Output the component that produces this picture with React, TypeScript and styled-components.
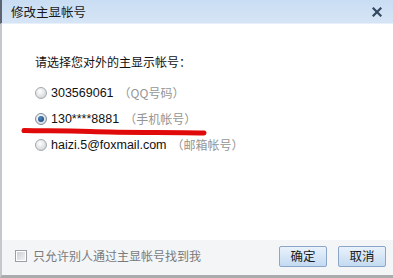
import React from "react";
import styled, { createGlobalStyle } from "styled-components";

const Global = createGlobalStyle`
  html, body { margin: 0; padding: 0; background: #ffffff; }
  body { font-family: "Noto Sans CJK SC", "DejaVu Sans", sans-serif; }
`;

const cjk = `"Noto Sans CJK SC", "Noto Sans", sans-serif`;
const latin = `"Liberation Sans", "Noto Sans CJK SC", sans-serif`;

const Window = styled.div`
  position: relative;
  width: 393px;
  height: 278px;
  display: flex;
  flex-direction: column;
  overflow: hidden;
  background: #ffffff;
`;

const TitleBar = styled.div`
  height: 24px;
  flex: none;
  display: flex;
  align-items: center;
  justify-content: space-between;
  padding: 0 10px 0 11px;
  background: linear-gradient(#c9ddf3, #d6e5f6);
  border-bottom: 1px solid #e8f0fa;
  border-left: 2px solid #5b6470;
  box-sizing: border-box;
`;

const Title = styled.span`
  font-family: ${cjk};
  font-size: 12.5px;
  color: #1a1a1a;
  line-height: 16px;
  margin-left: -2px;
`;

const Close = styled.span`
  display: flex;
  width: 12px;
  height: 12px;
  align-items: center;
  justify-content: center;
`;

const Body = styled.div`
  flex: 1;
  border-left: 2px solid #c4c7cb;
  padding: 30px 0 0 33px;
  box-sizing: border-box;
  display: flex;
  flex-direction: column;
`;

const Prompt = styled.div`
  font-family: ${cjk};
  font-size: 12px;
  line-height: 16px;
  color: #111;
`;

const OptionList = styled.div`
  display: flex;
  flex-direction: column;
  gap: 9px;
  margin-top: 14px;
`;

const Option = styled.label`
  display: flex;
  align-items: center;
  height: 17px;
`;

const Radio = styled.span<{ $on?: boolean }>`
  width: 12px;
  height: 12px;
  border-radius: 50%;
  box-sizing: border-box;
  border: 1px solid ${(p) => (p.$on ? "#7b8da3" : "#a3a8ae")};
  background: radial-gradient(circle at 40% 35%, #ffffff, #d8dadd 70%, #c4c7cb);
  display: flex;
  align-items: center;
  justify-content: center;
  margin-right: 4px;
  &::after {
    content: "";
    display: ${(p) => (p.$on ? "block" : "none")};
    width: 6px;
    height: 6px;
    border-radius: 50%;
    background: radial-gradient(circle at 40% 35%, #4f86c0, #123c6e);
  }
`;

const Account = styled.span`
  font-family: ${latin};
  font-size: 12.5px;
  color: #111;
  line-height: 16px;
`;

const Hint = styled.span`
  font-family: ${cjk};
  font-size: 12px;
  color: #959595;
  line-height: 16px;
  margin-left: 5px;
`;

const Footer = styled.div`
  height: 38px;
  flex: none;
  display: flex;
  align-items: center;
  justify-content: space-between;
  padding: 0 7px 3px 15px;
  box-sizing: border-box;
  background: #f3f5f7;
  border-left: 2px solid #c4c7cb;
  border-bottom: 3px solid #a9abad;
`;

const CheckRow = styled.label`
  display: flex;
  align-items: center;
  gap: 6px;
  margin-left: -2px;
`;

const Check = styled.span`
  width: 12px;
  height: 12px;
  box-sizing: border-box;
  border: 1px solid #9a9fa5;
  background: linear-gradient(135deg, #c9ccd0, #f4f5f6);
  box-shadow: inset 0 0 0 1px #ffffff;
`;

const CheckText = styled.span`
  font-family: ${cjk};
  font-size: 12px;
  color: #7a7a7a;
  line-height: 16px;
`;

const Buttons = styled.div`
  display: flex;
  gap: 11px;
`;

const Button = styled.button`
  width: 48px;
  height: 21px;
  padding: 0;
  box-sizing: border-box;
  border: 1px solid #8aa6c8;
  border-radius: 2px;
  background: linear-gradient(#e9f2fc, #c4daf1);
  font-family: ${cjk};
  font-size: 12.5px;
  color: #1a1a1a;
  line-height: 16px;
`;

const Annotation = styled.svg`
  position: absolute;
  left: 0;
  top: 0;
  pointer-events: none;
`;

export default function App() {
  return (
    <>
      <Global />
      <Window>
        <TitleBar>
          <Title>修改主显帐号</Title>
          <Close>
            <svg width="10" height="10" viewBox="0 0 10 10">
              <path d="M1.5 1.5 L8.5 8.5 M8.5 1.5 L1.5 8.5" stroke="#33475e" strokeWidth="2.2" strokeLinecap="square" />
            </svg>
          </Close>
        </TitleBar>
        <Body>
          <Prompt>请选择您对外的主显示帐号：</Prompt>
          <OptionList>
            <Option>
              <Radio />
              <Account>303569061</Account>
              <Hint>（QQ号码）</Hint>
            </Option>
            <Option>
              <Radio $on />
              <Account>130****8881</Account>
              <Hint>（手机帐号）</Hint>
            </Option>
            <Option>
              <Radio />
              <Account>haizi.5@foxmail.com</Account>
              <Hint>（邮箱帐号）</Hint>
            </Option>
          </OptionList>
        </Body>
        <Footer>
          <CheckRow>
            <Check />
            <CheckText>只允许别人通过主显帐号找到我</CheckText>
          </CheckRow>
          <Buttons>
            <Button>确定</Button>
            <Button>取消</Button>
          </Buttons>
        </Footer>
        <Annotation width="393" height="278" viewBox="0 0 393 278">
          <path
            d="M24 130.5 C40 131, 60 130, 90 131.5 C130 133, 170 132, 204 133"
            stroke="#e10a0a"
            strokeWidth="5"
            fill="none"
            strokeLinecap="round"
          />
        </Annotation>
      </Window>
    </>
  );
}
